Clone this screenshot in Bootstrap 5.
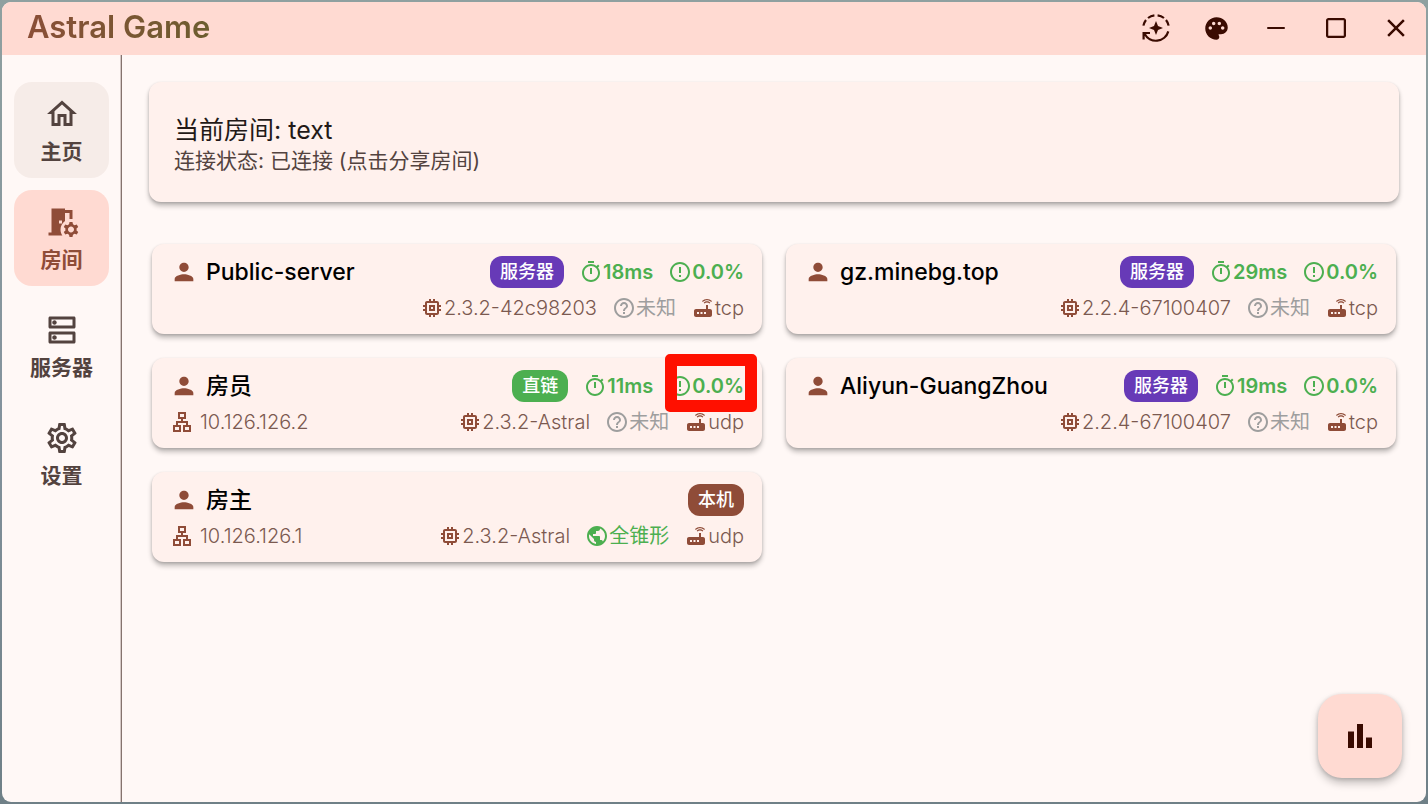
<!DOCTYPE html>
<html lang="zh-CN">
<head>
<meta charset="utf-8">
<meta name="viewport" content="width=device-width, initial-scale=1">
<title>Astral Game</title>
<link href="https://cdn.jsdelivr.net/npm/bootstrap@5.3.0/dist/css/bootstrap.min.css" rel="stylesheet">
<style>
:root{--primary:#8f4c38;--container:#ffdad2;--on-container:#3a0b01;--surface:#fff8f6;--tile:#fff1ed;--ink:#231917;--ink-soft:#53433f;--muted:#7b5950;--ok:#4caf50;--server:#673ab7;--unknown:#9e9e9e}
body{font-family:Inter,"Noto Sans CJK SC",sans-serif;background:linear-gradient(#8fa0a0,#84939d 50%,#6f8087);color:var(--ink)}
svg{fill:currentColor;flex:none}
.desktop{padding:2px}
.app-window{background:var(--surface);border-radius:9px;overflow:hidden}
.title-bar{background:var(--container);color:var(--on-container);height:53px;padding-bottom:1px}
.app-title{font-size:31px;line-height:40px;font-weight:600;padding:0 0 2px 25px;background:linear-gradient(90deg,#8f4c38,#6c5d2f);-webkit-background-clip:text;background-clip:text;color:transparent}
.win-btn{width:60px;color:inherit;background:none;border:0}
.side-nav{width:120px;padding:27px 12px 12px;gap:12px;border-right:1px solid #85736e;box-shadow:inset -1px 0 #d5c8c5}
.side-link{height:96px;padding-top:14px;gap:6px;border-radius:18px;color:var(--ink-soft);font-size:21px;line-height:28px;font-weight:700;text-decoration:none}
.side-link:hover,.side-link.is-hovered{background:#f6ece8}
.side-link.active{background:var(--container);color:var(--primary)}
.content-area{padding:27px}
.tile{background:var(--tile);border-radius:12px;box-shadow:0 4px 5px rgba(0,0,0,.24),0 1px 3px rgba(0,0,0,.16)}
.room-tile{padding:31px 25px 27px;margin-bottom:42px}
.room-name{font-size:25px;line-height:34px}
.room-state{font-size:21px;line-height:28px;color:var(--ink-soft)}
.peers{padding:0 3px}
.peer{padding:12px 18px 14px;gap:8px}
.peer-top{height:32px}
.peer-name{font-size:23px;line-height:32px;font-weight:500;color:#000}
.metrics{gap:15px;font-size:20px;line-height:24px;color:var(--muted);font-weight:300}
.strong-metrics{font-weight:600;color:var(--ok)}
.tag{font-size:18px;line-height:32px;padding:0 10px;border-radius:12px;color:#fff;font-weight:500}
.tag-server{background:var(--server)}.tag-direct{background:var(--ok)}.tag-self{background:var(--primary)}
.addr{gap:6px}
.c-primary{color:var(--primary)}
.c-ok{color:var(--ok);font-weight:400}
.c-unknown{color:var(--unknown);font-weight:400}
.marker{position:absolute;top:-20px;bottom:-14px;right:-13px;width:92px;border:12px solid #ff1000;border-radius:5px;pointer-events:none}
.fab{position:fixed;right:26px;bottom:26px;width:84px;height:84px;border:0;border-radius:24px;background:var(--container);color:var(--on-container);box-shadow:0 5px 9px rgba(0,0,0,.24),0 1px 4px rgba(0,0,0,.16)}
</style>
</head>
<body>
<svg class="d-none" xmlns="http://www.w3.org/2000/svg">
<symbol id="i-home" viewBox="0 0 24 24"><path d="M12 5.69l5 4.5V18h-2v-6H9v6H7v-7.81l5-4.5M12 3L2 12h3v8h6v-6h2v6h6v-8h3L12 3z"/></symbol>
<symbol id="i-room" viewBox="0 0 24 24"><path d="M14 11.26V6h3v4h2V4h-5V3H5v16H3v2h9.26c-.79-1.13-1.26-2.51-1.26-4 0-2.38 1.19-4.47 3-5.74zM10 11h2v2h-2v-2zm11.69 5.37l1.14-1-1-1.73-1.45.49c-.32-.27-.68-.48-1.08-.63L19 12h-2l-.3 1.49c-.4.15-.76.36-1.08.63l-1.45-.49-1 1.73 1.14 1c-.08.5-.08.76 0 1.26l-1.14 1 1 1.73 1.45-.49c.32.27.68.48 1.08.63L17 22h2l.3-1.49c.4-.15.76-.36 1.08-.63l1.45.49 1-1.73-1.14-1c.08-.51.08-.77 0-1.27zM18 19c-1.1 0-2-.9-2-2s.9-2 2-2 2 .9 2 2-.9 2-2 2z"/></symbol>
<symbol id="i-dns" viewBox="0 0 24 24"><path d="M19 15v4H5v-4h14m1-2H4c-.55 0-1 .45-1 1v6c0 .55.45 1 1 1h16c.55 0 1-.45 1-1v-6c0-.55-.45-1-1-1zM7 18.5c-.82 0-1.5-.67-1.5-1.5s.68-1.5 1.5-1.5 1.5.67 1.5 1.5-.67 1.5-1.5 1.5zM19 5v4H5V5h14m1-2H4c-.55 0-1 .45-1 1v6c0 .55.45 1 1 1h16c.55 0 1-.45 1-1V4c0-.55-.45-1-1-1zM7 8.5c-.82 0-1.5-.67-1.5-1.5S6.18 5.5 7 5.5s1.5.68 1.5 1.5S7.83 8.5 7 8.5z"/></symbol>
<symbol id="i-settings" viewBox="0 0 24 24"><path d="M19.43 12.98c.04-.32.07-.64.07-.98 0-.34-.03-.66-.07-.98l2.11-1.65c.19-.15.24-.42.12-.64l-2-3.46c-.09-.16-.26-.25-.44-.25-.06 0-.12.01-.17.03l-2.49 1c-.52-.4-1.08-.73-1.69-.98l-.38-2.65C14.46 2.18 14.25 2 14 2h-4c-.25 0-.46.18-.49.42l-.38 2.65c-.61.25-1.17.59-1.69.98l-2.49-1c-.06-.02-.12-.03-.18-.03-.17 0-.34.09-.43.25l-2 3.46c-.13.22-.07.49.12.64l2.11 1.65c-.04.32-.07.65-.07.98 0 .33.03.66.07.98l-2.11 1.65c-.19.15-.24.42-.12.64l2 3.46c.09.16.26.25.44.25.06 0 .12-.01.17-.03l2.49-1c.52.4 1.08.73 1.69.98l.38 2.65c.03.24.24.42.49.42h4c.25 0 .46-.18.49-.42l.38-2.65c.61-.25 1.17-.59 1.69-.98l2.49 1c.06.02.12.03.18.03.17 0 .34-.09.43-.25l2-3.46c.12-.22.07-.49-.12-.64l-2.11-1.65zm-1.98-1.71c.04.31.05.52.05.73 0 .21-.02.43-.05.73l-.14 1.13.89.7 1.08.84-.7 1.21-1.27-.51-1.04-.42-.9.68c-.43.32-.84.56-1.25.73l-1.06.43-.16 1.13-.2 1.35h-1.4l-.19-1.35-.16-1.13-1.06-.43c-.43-.18-.83-.41-1.23-.71l-.91-.7-1.06.43-1.27.51-.7-1.21 1.08-.84.89-.7-.14-1.13c-.03-.31-.05-.54-.05-.74s.02-.43.05-.73l.14-1.13-.89-.7-1.08-.84.7-1.21 1.27.51 1.04.42.9-.68c.43-.32.84-.56 1.25-.73l1.06-.43.16-1.13.2-1.35h1.39l.19 1.35.16 1.13 1.06.43c.43.18.83.41 1.23.71l.91.7 1.06-.43 1.27-.51.7 1.21-1.07.85-.89.7.14 1.13zM12 8c-2.21 0-4 1.79-4 4s1.79 4 4 4 4-1.79 4-4-1.79-4-4-4zm0 6c-1.1 0-2-.9-2-2s.9-2 2-2 2 .9 2 2-.9 2-2 2z"/></symbol>
<symbol id="i-person" viewBox="0 0 24 24"><path d="M12 12c2.21 0 4-1.79 4-4s-1.79-4-4-4-4 1.79-4 4 1.79 4 4 4zm0 2c-2.67 0-8 1.34-8 4v2h16v-2c0-2.66-5.33-4-8-4z"/></symbol>
<symbol id="i-chip" viewBox="0 0 24 24"><path d="M15 9H9v6h6V9zm-2 4h-2v-2h2v2zm8-2V9h-2V7c0-1.1-.9-2-2-2h-2V3h-2v2h-2V3H9v2H7c-1.1 0-2 .9-2 2v2H3v2h2v2H3v2h2v2c0 1.1.9 2 2 2h2v2h2v-2h2v2h2v-2h2c1.1 0 2-.9 2-2v-2h2v-2h-2v-2h2zm-4 6H7V7h10v10z"/></symbol>
<symbol id="i-lan" viewBox="0 0 24 24"><path d="M13 22h8v-7h-3v-4h-5V9h3V2H8v7h3v2H6v4H3v7h8v-7H8v-2h8v2h-3v7zM10 7V4h4v3h-4zM9 17v3H5v-3h4zm10 0v3h-4v-3h4z"/></symbol>
<symbol id="i-timer" viewBox="0 0 24 24"><path d="M15 1H9v2h6V1zm-4 13h2V8h-2v6zm8.03-6.61l1.42-1.42c-.43-.51-.9-.99-1.41-1.41l-1.42 1.42C16.07 4.74 14.12 4 12 4c-4.97 0-9 4.03-9 9s4.02 9 9 9 9-4.03 9-9c0-2.12-.74-4.07-1.97-5.61zM12 20c-3.87 0-7-3.13-7-7s3.13-7 7-7 7 3.13 7 7-3.13 7-7 7z"/></symbol>
<symbol id="i-loss" viewBox="0 0 24 24"><path d="M11 15h2v2h-2zm0-8h2v6h-2zm.99-5C6.47 2 2 6.48 2 12s4.47 10 9.99 10C17.52 22 22 17.52 22 12S17.52 2 11.99 2zM12 20c-4.42 0-8-3.58-8-8s3.58-8 8-8 8 3.58 8 8-3.58 8-8 8z"/></symbol>
<symbol id="i-help" viewBox="0 0 24 24"><path d="M11 18h2v-2h-2v2zm1-16C6.48 2 2 6.48 2 12s4.48 10 10 10 10-4.48 10-10S17.52 2 12 2zm0 18c-4.41 0-8-3.59-8-8s3.59-8 8-8 8 3.59 8 8-3.59 8-8 8zm0-14c-2.21 0-4 1.79-4 4h2c0-1.1.9-2 2-2s2 .9 2 2c0 2-3 1.75-3 5h2c0-2.25 3-2.5 3-5 0-2.21-1.79-4-4-4z"/></symbol>
<symbol id="i-router" viewBox="0 0 24 24"><path d="M20.2 5.9l.8-.8C19.6 3.7 17.8 3 16 3s-3.6.7-5 2.1l.8.8C13 4.8 14.5 4.2 16 4.2s3 .6 4.2 1.7zm-.9.8c-.9-.9-2.1-1.4-3.3-1.4s-2.4.5-3.3 1.4l.8.8c.7-.7 1.6-1 2.5-1 .9 0 1.8.3 2.5 1l.8-.8zM19 13h-2V9h-2v4H5c-1.1 0-2 .9-2 2v4c0 1.1.9 2 2 2h14c1.1 0 2-.9 2-2v-4c0-1.1-.9-2-2-2zM8 18H6v-2h2v2zm3.5 0h-2v-2h2v2zm3.5 0h-2v-2h2v2z"/></symbol>
<symbol id="i-globe" viewBox="0 0 24 24"><path d="M12 2C6.48 2 2 6.48 2 12s4.48 10 10 10 10-4.48 10-10S17.52 2 12 2zm-1 17.93c-3.95-.49-7-3.85-7-7.93 0-.62.08-1.21.21-1.79L9 15v1c0 1.1.9 2 2 2v1.93zm6.9-2.54c-.26-.81-1-1.39-1.9-1.39h-1v-3c0-.55-.45-1-1-1H8v-2h2c.55 0 1-.45 1-1V7h2c1.1 0 2-.9 2-2v-.41c2.93 1.19 5 4.06 5 7.41 0 2.08-.8 3.97-2.1 5.39z"/></symbol>
<symbol id="i-palette" viewBox="0 0 24 24"><path d="M12 2C6.49 2 2 6.49 2 12s4.49 10 10 10c1.38 0 2.5-1.12 2.5-2.5 0-.61-.23-1.2-.64-1.67-.08-.1-.13-.21-.13-.33 0-.28.22-.5.5-.5H16c3.31 0 6-2.69 6-6 0-4.96-4.49-9-10-9zm5.5 11c-.83 0-1.5-.67-1.5-1.5s.67-1.5 1.5-1.5 1.5.67 1.5 1.5-.67 1.5-1.5 1.5zm-3-4c-.83 0-1.5-.67-1.5-1.5S13.67 6 14.5 6s1.5.67 1.5 1.5S15.33 9 14.5 9zM5 11.5c0-.83.67-1.5 1.5-1.5s1.5.67 1.5 1.5S7.33 13 6.5 13 5 12.33 5 11.5zm6-4c0 .83-.67 1.5-1.5 1.5S8 8.33 8 7.5 8.67 6 9.5 6s1.5.67 1.5 1.5z"/></symbol>
</svg>

<div class="desktop d-flex flex-column min-vh-100">
<div class="app-window d-flex flex-column flex-grow-1">
  <header class="title-bar d-flex align-items-center justify-content-between">
    <h1 class="app-title m-0">Astral Game</h1>
    <div class="d-flex align-self-stretch">
      <button class="win-btn" type="button" aria-label="自动更新"><svg width="30" height="30" viewBox="-15 -15 30 30"><g fill="none" stroke="currentColor" stroke-width="2.2"><path d="M-12.6-2.4A12.8 12.8 0 0 1-10-8M-8-10A12.8 12.8 0 0 1-1.6-12.7M1.6-12.7A12.8 12.8 0 0 1 8-10M10-8A12.8 12.8 0 0 1 12.6-2.4M12.3 3.4A12.8 12.8 0 0 1-11.4 5.8M-12.4 11.5V5H-6"/></g><path d="M0-7L2-2 7 0 2 2 0 7-2 2-7 0-2-2z"/></svg></button>
      <button class="win-btn" type="button" aria-label="主题颜色"><svg width="27" height="27"><use href="#i-palette"/></svg></button>
      <button class="win-btn" type="button" aria-label="最小化"><svg width="30" height="30" viewBox="0 0 24 24"><path d="M19 12.8H5v-1.6h14z"/></svg></button>
      <button class="win-btn" type="button" aria-label="最大化"><svg width="30" height="30" viewBox="0 0 24 24"><path d="M18 4H6c-1.1 0-2 .9-2 2v12c0 1.1.9 2 2 2h12c1.1 0 2-.9 2-2V6c0-1.1-.9-2-2-2zm.2 14.2H5.8V5.8h12.4v12.4z"/></svg></button>
      <button class="win-btn" type="button" aria-label="关闭"><svg width="30" height="30" viewBox="0 0 24 24"><path d="M19 6.41L17.59 5 12 10.59 6.41 5 5 6.41 10.59 12 5 17.59 6.41 19 12 13.41 17.59 19 19 17.59 13.41 12z"/></svg></button>
    </div>
  </header>

  <div class="d-flex flex-grow-1">
    <nav class="side-nav d-flex flex-column flex-shrink-0">
      <a href="#" class="side-link is-hovered d-flex flex-column align-items-center"><svg width="36" height="36"><use href="#i-home"/></svg>主页</a>
      <a href="#" class="side-link active d-flex flex-column align-items-center" aria-current="page"><svg width="36" height="36"><use href="#i-room"/></svg>房间</a>
      <a href="#" class="side-link d-flex flex-column align-items-center"><svg width="36" height="36"><use href="#i-dns"/></svg>服务器</a>
      <a href="#" class="side-link d-flex flex-column align-items-center"><svg width="36" height="36"><use href="#i-settings"/></svg>设置</a>
    </nav>

    <main class="content-area flex-grow-1">
      <section class="tile room-tile">
        <p class="room-name m-0">当前房间: text</p>
        <p class="room-state m-0">连接状态: 已连接 (点击分享房间)</p>
      </section>

      <div class="peers">
      <div class="row row-cols-2 g-4">
        <div class="col"><article class="tile peer d-flex flex-column">
          <div class="peer-top d-flex align-items-center justify-content-between">
            <div class="d-flex align-items-center gap-2"><svg class="c-primary" width="28" height="28"><use href="#i-person"/></svg><span class="peer-name">Public-server</span></div>
            <div class="metrics strong-metrics d-flex align-items-center"><span class="tag tag-server">服务器</span><span class="d-flex"><svg width="24" height="24"><use href="#i-timer"/></svg>18ms</span><span class="d-flex"><svg width="24" height="24"><use href="#i-loss"/></svg>0.0%</span></div>
          </div>
          <div class="metrics d-flex justify-content-end"><span class="d-flex"><svg class="c-primary" width="24" height="24"><use href="#i-chip"/></svg>2.3.2-42c98203</span><span class="d-flex c-unknown"><svg width="24" height="24"><use href="#i-help"/></svg>未知</span><span class="d-flex"><svg class="c-primary" width="24" height="24"><use href="#i-router"/></svg>tcp</span></div>
        </article></div>

        <div class="col"><article class="tile peer d-flex flex-column">
          <div class="peer-top d-flex align-items-center justify-content-between">
            <div class="d-flex align-items-center gap-2"><svg class="c-primary" width="28" height="28"><use href="#i-person"/></svg><span class="peer-name">gz.minebg.top</span></div>
            <div class="metrics strong-metrics d-flex align-items-center"><span class="tag tag-server">服务器</span><span class="d-flex"><svg width="24" height="24"><use href="#i-timer"/></svg>29ms</span><span class="d-flex"><svg width="24" height="24"><use href="#i-loss"/></svg>0.0%</span></div>
          </div>
          <div class="metrics d-flex justify-content-end"><span class="d-flex"><svg class="c-primary" width="24" height="24"><use href="#i-chip"/></svg>2.2.4-67100407</span><span class="d-flex c-unknown"><svg width="24" height="24"><use href="#i-help"/></svg>未知</span><span class="d-flex"><svg class="c-primary" width="24" height="24"><use href="#i-router"/></svg>tcp</span></div>
        </article></div>

        <div class="col"><article class="tile peer d-flex flex-column">
          <div class="peer-top d-flex align-items-center justify-content-between">
            <div class="d-flex align-items-center gap-2"><svg class="c-primary" width="28" height="28"><use href="#i-person"/></svg><span class="peer-name">房员</span></div>
            <div class="metrics strong-metrics d-flex align-items-center"><span class="tag tag-direct">直链</span><span class="d-flex"><svg width="24" height="24"><use href="#i-timer"/></svg>11ms</span><span class="d-flex position-relative"><svg width="24" height="24"><use href="#i-loss"/></svg>0.0%<span class="marker"></span></span></div>
          </div>
          <div class="d-flex justify-content-between">
            <div class="metrics addr d-flex"><svg class="c-primary" width="24" height="24"><use href="#i-lan"/></svg>10.126.126.2</div>
            <div class="metrics d-flex"><span class="d-flex"><svg class="c-primary" width="24" height="24"><use href="#i-chip"/></svg>2.3.2-Astral</span><span class="d-flex c-unknown"><svg width="24" height="24"><use href="#i-help"/></svg>未知</span><span class="d-flex"><svg class="c-primary" width="24" height="24"><use href="#i-router"/></svg>udp</span></div>
          </div>
        </article></div>

        <div class="col"><article class="tile peer d-flex flex-column">
          <div class="peer-top d-flex align-items-center justify-content-between">
            <div class="d-flex align-items-center gap-2"><svg class="c-primary" width="28" height="28"><use href="#i-person"/></svg><span class="peer-name">Aliyun-GuangZhou</span></div>
            <div class="metrics strong-metrics d-flex align-items-center"><span class="tag tag-server">服务器</span><span class="d-flex"><svg width="24" height="24"><use href="#i-timer"/></svg>19ms</span><span class="d-flex"><svg width="24" height="24"><use href="#i-loss"/></svg>0.0%</span></div>
          </div>
          <div class="metrics d-flex justify-content-end"><span class="d-flex"><svg class="c-primary" width="24" height="24"><use href="#i-chip"/></svg>2.2.4-67100407</span><span class="d-flex c-unknown"><svg width="24" height="24"><use href="#i-help"/></svg>未知</span><span class="d-flex"><svg class="c-primary" width="24" height="24"><use href="#i-router"/></svg>tcp</span></div>
        </article></div>

        <div class="col"><article class="tile peer d-flex flex-column">
          <div class="peer-top d-flex align-items-center justify-content-between">
            <div class="d-flex align-items-center gap-2"><svg class="c-primary" width="28" height="28"><use href="#i-person"/></svg><span class="peer-name">房主</span></div>
            <div class="metrics strong-metrics d-flex align-items-center"><span class="tag tag-self">本机</span></div>
          </div>
          <div class="d-flex justify-content-between">
            <div class="metrics addr d-flex"><svg class="c-primary" width="24" height="24"><use href="#i-lan"/></svg>10.126.126.1</div>
            <div class="metrics d-flex"><span class="d-flex"><svg class="c-primary" width="24" height="24"><use href="#i-chip"/></svg>2.3.2-Astral</span><span class="d-flex c-ok"><svg width="24" height="24"><use href="#i-globe"/></svg>全锥形</span><span class="d-flex"><svg class="c-primary" width="24" height="24"><use href="#i-router"/></svg>udp</span></div>
          </div>
        </article></div>
      </div>
      </div>
    </main>
  </div>
</div>
</div>

<button class="fab" type="button" aria-label="统计"><svg width="36" height="36" viewBox="0 0 24 24"><path d="M4 9h4v11H4zM16 13h4v7h-4zM10 4h4v16h-4z"/></svg></button>
<script src="https://cdn.jsdelivr.net/npm/bootstrap@5.3.0/dist/js/bootstrap.bundle.min.js"></script>
</body>
</html>
